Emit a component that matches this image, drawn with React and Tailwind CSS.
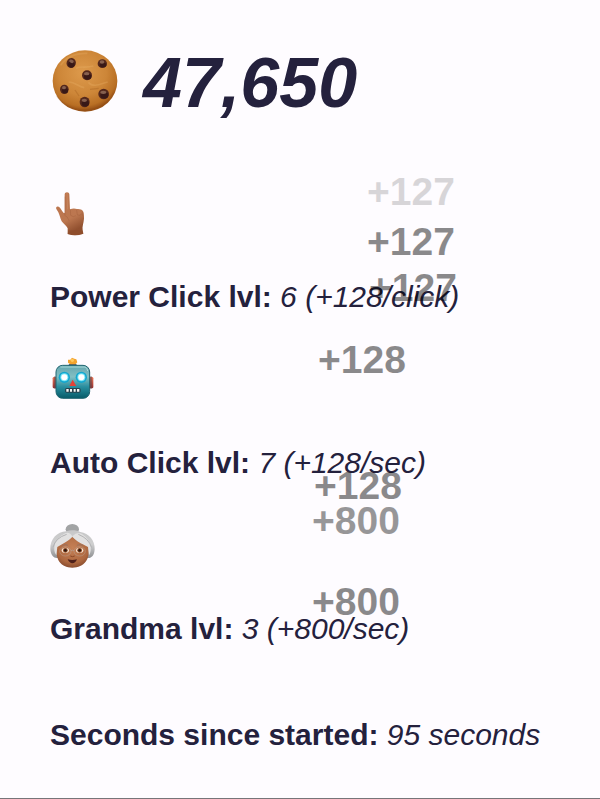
import React from "react";

function Cookie() {
  const chips = [
    [94, 68, 14, 15, 20],
    [187, 70, 14, 13, 0],
    [141, 105, 15, 15, 0],
    [73, 147, 13, 14, 0],
    [191, 161, 16, 16, 0],
    [134, 185, 15, 16, 0],
  ];
  return (
    <svg className="block h-[76px] w-[70px]" viewBox="30 9 210 228" aria-hidden="true">
      <defs>
        <radialGradient id="dough" cx="0.46" cy="0.36" r="0.62">
          <stop offset="0" stopColor="#dd9a4c" />
          <stop offset="0.6" stopColor="#cd8638" />
          <stop offset="0.88" stopColor="#b96f24" />
          <stop offset="1" stopColor="#985116" />
        </radialGradient>
      </defs>
      <ellipse cx="135" cy="123" rx="97" ry="92" fill="url(#dough)" />
      <path d="M62 76 C80 48 110 39 142 40 M108 85 C120 77 136 85 160 78 M145 127 C160 144 181 132 203 126 M86 126 C106 126 116 141 133 143" fill="none" stroke="#eab36a" strokeWidth="5" opacity="0.3" />
      <path d="M50 167 C70 199 104 211 140 210 C177 208 207 188 220 159 M150 148 L176 145 M105 150 L117 168" fill="none" stroke="#8e4c12" strokeWidth="4" opacity="0.25" />
      {chips.map(([x, y, rx, ry, angle]) => (
        <g key={x} transform={`rotate(${angle} ${x} ${y})`}>
          <ellipse cx={x} cy={y + 1} rx={rx} ry={ry} fill="#54281c" />
          <ellipse cx={x + 2} cy={y + 5} rx={rx - 4} ry={ry - 6} fill="#381817" />
          <ellipse cx={x - 1} cy={y - 4} rx={rx - 7} ry="5" fill="#86604f" />
        </g>
      ))}
    </svg>
  );
}

function Finger() {
  return (
    <svg className="block size-[46px]" viewBox="30 33 138 138" aria-hidden="true">
      <defs>
        <linearGradient id="skin" x1="0" y1="0" x2="0.35" y2="1">
          <stop offset="0" stopColor="#bd764e" />
          <stop offset="0.7" stopColor="#bc7750" />
          <stop offset="1" stopColor="#91502f" />
        </linearGradient>
      </defs>
      <path
        d="M74 43 C74 35 88 35 88 43 L90 88 C98 84 106 85 111 87 C119 86 126 89 128 92 C132 95 132 105 132 116 C131 130 126 139 128 151 L130 161 Q106 170 83 162 L83 145 C80 137 70 132 65 124 C60 115 60 107 55 97 L49 87 C46 79 54 77 60 83 L70 98 L74 99Z"
        fill="url(#skin)"
      />
      <path d="M75 50 L75 105 M91 88 L92 106 Q99 113 108 107 M110 90 L112 105 Q119 108 125 102 M127 95 L127 107 M73 105 Q84 110 87 122" fill="none" stroke="#8c4a2c" strokeWidth="2" opacity="0.35" />
      <path d="M81 39 L83 88" fill="none" stroke="#d49670" strokeWidth="3" opacity="0.4" />
      <path d="M85 151 L128 151 L130 161 Q106 170 83 162Z" fill="#8c4929" opacity="0.4" />
    </svg>
  );
}

function Robot() {
  return (
    <svg className="block size-[46px]" viewBox="30 36 138 138" aria-hidden="true">
      <defs>
        <linearGradient id="metal" x1="0" y1="0" x2="0" y2="1">
          <stop offset="0" stopColor="#63a5ae" />
          <stop offset="0.35" stopColor="#83bfc3" />
          <stop offset="0.65" stopColor="#288e9f" />
          <stop offset="1" stopColor="#075a68" />
        </linearGradient>
        <linearGradient id="ear" x1="0" y1="0" x2="0" y2="1">
          <stop offset="0" stopColor="#eb7556" />
          <stop offset="1" stopColor="#922f30" />
        </linearGradient>
      </defs>
      <rect x="38" y="96" width="13" height="34" rx="4" fill="url(#ear)" />
      <rect x="147" y="96" width="13" height="34" rx="4" fill="url(#ear)" />
      <path d="M45 94 V131 M153 94 V131" stroke="#61454c" strokeWidth="3" />
      <path d="M84 65 Q86 55 98 55 Q110 55 113 65Z" fill="#495768" />
      <path d="M84 44 L91 44 L96 38 L103 41 L109 43 L112 52 L107 58 L91 58 L84 53Z" fill="#f3a32d" />
      <circle cx="97" cy="46" r="5" fill="#ffc75a" />
      <rect x="48" y="61" width="101" height="99" rx="20" fill="url(#metal)" stroke="#216571" strokeWidth="3" />
      <path d="M61 66 H135 Q142 68 143 78" fill="none" stroke="#a8d9d9" strokeWidth="3" />
      {[73, 124].map((x) => (
        <g key={x}>
          <circle cx={x} cy="97" r="17" fill="#13a7cf" />
          <circle cx={x} cy="97" r="12" fill="#78e5f5" />
          <circle cx={x} cy="97" r="9" fill="#ffffff" />
        </g>
      ))}
      <path d="M98 104 L109 123 H88Z" fill="#e54236" />
      <rect x="75" y="129" width="47" height="14" rx="5" fill="#28434f" />
      <path d="M79 136 H86 M90 136 H96 M101 136 H107 M111 136 H118" stroke="#f7f8f5" strokeWidth="8" />
    </svg>
  );
}

function Grandma() {
  return (
    <svg className="block size-[46px]" viewBox="30 24 138 138" aria-hidden="true">
      <defs>
        <radialGradient id="face" cx="0.5" cy="0.35" r="0.7">
          <stop offset="0" stopColor="#c58055" />
          <stop offset="0.7" stopColor="#ae6840" />
          <stop offset="1" stopColor="#80452b" />
        </radialGradient>
        <linearGradient id="hair" x1="0" y1="0" x2="0" y2="1">
          <stop offset="0" stopColor="#c7c7c8" />
          <stop offset="0.5" stopColor="#cfcfd0" />
          <stop offset="1" stopColor="#8f9093" />
        </linearGradient>
      </defs>
      <ellipse cx="97" cy="43" rx="20" ry="16" fill="#a2a3a5" />
      <path d="M31 103 C30 73 51 50 79 49 C92 44 111 46 121 51 C147 55 165 76 164 103 C163 123 153 131 142 129 H52 C42 130 32 121 31 103Z" fill="url(#hair)" />
      <path d="M51 94 C64 85 80 79 97 66 C113 79 132 84 145 94 C152 133 133 158 97 158 C62 158 44 132 51 94Z" fill="url(#face)" />
      <path d="M97 64 C88 78 69 86 52 96 L49 121 C35 102 45 70 73 56 Q88 48 97 64Z M97 64 Q112 48 126 57 C151 73 159 103 147 121 L144 96 C125 86 107 79 97 64Z" fill="#e2e1e1" />
      <path d="M39 97 Q46 69 80 58 M155 98 Q146 70 115 58" fill="none" stroke="#b2b2b4" strokeWidth="3" />
      {[76, 119].map((x) => (
        <g key={x}>
          <ellipse cx={x} cy="106" rx="11" ry="8" fill="#f7e4d2" />
          <circle cx={x} cy="106" r="7" fill="#8b461f" />
          <circle cx={x} cy="106" r="4" fill="#291813" />
          <ellipse cx={x} cy="109" rx="17" ry="14" fill="none" stroke="#b7a196" strokeWidth="2" opacity="0.7" />
        </g>
      ))}
      <path d="M93 107 Q97 104 102 107" fill="none" stroke="#b7a196" strokeWidth="2" />
      <path d="M67 91 Q76 86 84 91 M111 91 Q120 86 129 91" fill="none" stroke="#89706a" strokeWidth="2" />
      <path d="M91 123 Q97 127 104 123" fill="none" stroke="#884626" strokeWidth="3" />
      <path d="M83 133 Q97 137 111 133 Q106 145 97 145 Q88 144 83 133Z" fill="#4e201a" />
    </svg>
  );
}

const upgrades = [
  { name: "Power Click", level: 6, rate: "(+128/click)", Icon: Finger },
  { name: "Auto Click", level: 7, rate: "(+128/sec)", Icon: Robot },
  { name: "Grandma", level: 3, rate: "(+800/sec)", Icon: Grandma },
];

const gains = [
  { text: "+127", place: "left-[367px] top-[172px] opacity-15" },
  { text: "+127", place: "left-[367px] top-[222px] opacity-45" },
  { text: "+127", place: "left-[369px] top-[268px] opacity-45" },
  { text: "+128", place: "left-[318px] top-[340px] opacity-45" },
  { text: "+128", place: "left-[314px] top-[466px] opacity-45" },
  { text: "+800", place: "left-[312px] top-[501px] opacity-40" },
  { text: "+800", place: "left-[312px] top-[582px] opacity-45" },
];

export default function App() {
  return (
    <main className="relative min-h-screen border-b border-[#777579] bg-[#fefcff] px-[50px] pt-[43px] pb-10 font-['Liberation_Sans',Arial,sans-serif] text-[#24213d]">
      <header className="flex items-start gap-[23px]">
        <button type="button" aria-label="Click the cookie" className="cursor-pointer">
          <Cookie />
        </button>
        <h1 className="text-[70px] leading-[80px] font-bold italic">47,650</h1>
      </header>

      <div className="mt-[68px] flex flex-col gap-[42px]">
        {upgrades.map(({ name, level, rate, Icon }) => (
          <section key={name} className="flex flex-col items-start gap-[42px]">
            <button type="button" aria-label={`Upgrade ${name}`} className="cursor-pointer">
              <Icon />
            </button>
            <p className="text-[30px] leading-[36px] whitespace-nowrap">
              <b>{name} lvl:</b>{" "}
              <i>
                {level} {rate}
              </i>
            </p>
          </section>
        ))}
      </div>

      <p className="mt-[70px] text-[30px] leading-[36px] whitespace-nowrap">
        <b>Seconds since started:</b> <i>95 seconds</i>
      </p>

      {gains.map(({ text, place }) => (
        <span
          key={place}
          className={`pointer-events-none absolute text-[39px] leading-[40px] font-bold text-black ${place}`}
        >
          {text}
        </span>
      ))}
    </main>
  );
}
